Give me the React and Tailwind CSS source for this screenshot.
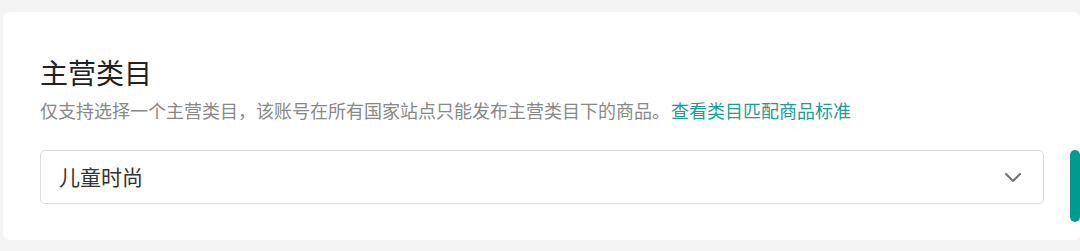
const FONT = { fontFamily: '"Noto Sans CJK SC", "Noto Sans", sans-serif' };

function Chevron() {
    return (
        <svg width="18" height="11" viewBox="0 0 18 11" fill="none" className="text-[#707070]">
            <path d="M2 2 L9 9 L16 2" stroke="currentColor" strokeWidth="2" strokeLinecap="round" strokeLinejoin="round" />
        </svg>
    );
}

export default function App() {
    return (
        <div className="w-[1080px] h-[251px] bg-[#f4f4f4] pt-[12px] pl-[3px] overflow-hidden" style={FONT}>
            <div className="relative w-[1077px] bg-white rounded-[6px] pl-[37px] pr-[36px] pt-[40px] pb-[36px]">
                <h2 className="text-[28px] leading-[40px] text-[#222] font-normal">主营类目</h2>
                <p className="mt-[5px] text-[18px] leading-[26px] text-[#888]">
                    仅支持选择一个主营类目，该账号在所有国家站点只能发布主营类目下的商品。
                    <a className="ml-[1px] text-[#1a9d95] cursor-pointer">查看类目匹配商品标准</a>
                </p>
                <div className="mt-[27px] h-[54px] border border-[#dcdcdc] rounded-[5px] flex items-center justify-between pl-[18px] pr-[21px]">
                    <span className="text-[21px] text-[#333]">儿童时尚</span>
                    <Chevron />
                </div>
                <div className="absolute right-0 top-[138px] w-[10px] h-[72px] rounded-full bg-[#009b90]" />
            </div>
        </div>
    );
}
